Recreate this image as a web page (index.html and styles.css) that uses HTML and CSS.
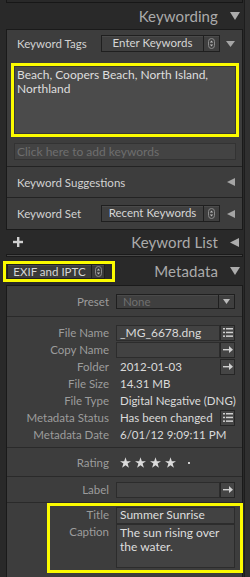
FILE: index.html
```html
<!DOCTYPE html>
<html>
<head>
<meta charset="utf-8">
<link rel="stylesheet" href="styles.css">
</head>
<body>
<div class="app">
  <div class="main">
    <div class="prev"></div>

    <div class="hdr">
      <span class="hdr-title">Keywording</span>
      <svg class="tri-hdr" width="10" height="8" viewBox="0 0 10 8"><polygon points="0,0 10,0 5,8"/></svg>
    </div>

    <div class="panel kw">
      <div class="sec tags">
        <div class="kw-row">
          <span class="kw-lbl">Keyword Tags</span>
          <div class="select sel-kw"><span class="sel-text">Enter Keywords</span><span class="step"><svg width="7" height="11" viewBox="0 0 7 11"><rect x="0.5" y="0.5" width="6" height="10" rx="3" fill="none" stroke="#8a8a8a"/><polygon points="3.5,2.5 5.2,4.6 1.8,4.6" fill="#bbb"/><polygon points="3.5,8.5 5.2,6.4 1.8,6.4" fill="#bbb"/></svg></span></div>
          <svg class="tri-sm" width="9" height="6" viewBox="0 0 9 6"><polygon points="0,0 9,0 4.5,6"/></svg>
        </div>
        <div class="hl hl-kw">
          <div class="kw-area">Beach, Coopers Beach, North Island, Northland</div>
        </div>
        <div class="kw-add">Click here to add keywords</div>
      </div>
      <div class="sec sug">
        <span class="kw-lbl">Keyword Suggestions</span>
        <svg class="tri-left" width="8" height="8" viewBox="0 0 8 8"><polygon points="8,0 8,8 0,4"/></svg>
      </div>
      <div class="sec set">
        <span class="kw-lbl">Keyword Set</span>
        <div class="select sel-kw"><span class="sel-text">Recent Keywords</span><span class="step"><svg width="7" height="11" viewBox="0 0 7 11"><rect x="0.5" y="0.5" width="6" height="10" rx="3" fill="none" stroke="#8a8a8a"/><polygon points="3.5,2.5 5.2,4.6 1.8,4.6" fill="#bbb"/><polygon points="3.5,8.5 5.2,6.4 1.8,6.4" fill="#bbb"/></svg></span></div>
        <svg class="tri-left" width="8" height="8" viewBox="0 0 8 8"><polygon points="8,0 8,8 0,4"/></svg>
      </div>
    </div>

    <div class="hdr hdr-list">
      <svg class="plus" width="10" height="10" viewBox="0 0 10 10"><rect x="4" y="0" width="2.4" height="10"/><rect x="0" y="3.8" width="10" height="2.4"/></svg>
      <span class="hdr-title">Keyword List</span>
      <svg class="tri-hdr" width="9" height="9" viewBox="0 0 9 9"><polygon points="9,0 9,9 0,4.5"/></svg>
    </div>
    <div class="panel collapsed"></div>

    <div class="hdr hdr-meta">
      <div class="hl hl-meta">
        <div class="select sel-meta"><span class="sel-text">EXIF and IPTC</span><span class="step"><svg width="7" height="11" viewBox="0 0 7 11"><rect x="0.5" y="0.5" width="6" height="10" rx="3" fill="none" stroke="#8a8a8a"/><polygon points="3.5,2.5 5.2,4.6 1.8,4.6" fill="#bbb"/><polygon points="3.5,8.5 5.2,6.4 1.8,6.4" fill="#bbb"/></svg></span></div>
      </div>
      <span class="hdr-title">Metadata</span>
      <svg class="tri-hdr" width="10" height="8" viewBox="0 0 10 8"><polygon points="0,0 10,0 5,8"/></svg>
    </div>

    <div class="panel md">
      <div class="md-preset">
        <span class="md-lbl">Preset</span>
        <div class="select sel-preset"><span class="sel-text dim">None</span><span class="step step-arrow"><svg width="7" height="5" viewBox="0 0 7 5"><polygon points="0,0 7,0 3.5,5" fill="#bbb"/></svg></span></div>
      </div>

      <div class="md-block info">
        <div class="md-row">
          <span class="md-lbl">File Name</span>
          <div class="field">_MG_6678.dng</div>
          <div class="btn"><svg width="10" height="9" viewBox="0 0 10 9"><rect x="0" y="0" width="2" height="1.5"/><rect x="3" y="0" width="7" height="1.5"/><rect x="0" y="3.7" width="2" height="1.5"/><rect x="3" y="3.7" width="7" height="1.5"/><rect x="0" y="7.4" width="2" height="1.5"/><rect x="3" y="7.4" width="7" height="1.5"/></svg></div>
        </div>
        <div class="md-row">
          <span class="md-lbl">Copy Name</span>
          <div class="field"></div>
          <div class="btn"><svg width="10" height="7" viewBox="0 0 10 7"><rect x="0" y="3" width="8" height="1.4"/><polygon points="6,0 10,3.7 6,7"/></svg></div>
        </div>
        <div class="md-row">
          <span class="md-lbl">Folder</span>
          <div class="val">2012-01-03</div>
          <div class="btn"><svg width="10" height="7" viewBox="0 0 10 7"><rect x="0" y="3" width="8" height="1.4"/><polygon points="6,0 10,3.7 6,7"/></svg></div>
        </div>
        <div class="md-row">
          <span class="md-lbl">File Size</span>
          <div class="val">14.31 MB</div>
        </div>
        <div class="md-row">
          <span class="md-lbl">File Type</span>
          <div class="val wide">Digital Negative (DNG)</div>
        </div>
        <div class="md-row">
          <span class="md-lbl">Metadata Status</span>
          <div class="val">Has been changed</div>
          <div class="btn"><svg width="10" height="9" viewBox="0 0 10 9"><rect x="0" y="0" width="2" height="1.5"/><rect x="3" y="0" width="7" height="1.5"/><rect x="0" y="3.7" width="2" height="1.5"/><rect x="3" y="3.7" width="7" height="1.5"/><rect x="0" y="7.4" width="2" height="1.5"/><rect x="3" y="7.4" width="7" height="1.5"/></svg></div>
        </div>
        <div class="md-row">
          <span class="md-lbl">Metadata Date</span>
          <div class="val wide">6/01/12 9:09:11 PM</div>
        </div>
      </div>

      <div class="md-block rating">
        <div class="md-row">
          <span class="md-lbl">Rating</span>
          <div class="stars">
            <svg width="11" height="11" viewBox="0 0 20 19"><polygon points="10,0 12.4,7 20,7 13.8,11.5 16.2,19 10,14.4 3.8,19 6.2,11.5 0,7 7.6,7"/></svg>
            <svg width="11" height="11" viewBox="0 0 20 19"><polygon points="10,0 12.4,7 20,7 13.8,11.5 16.2,19 10,14.4 3.8,19 6.2,11.5 0,7 7.6,7"/></svg>
            <svg width="11" height="11" viewBox="0 0 20 19"><polygon points="10,0 12.4,7 20,7 13.8,11.5 16.2,19 10,14.4 3.8,19 6.2,11.5 0,7 7.6,7"/></svg>
            <svg width="11" height="11" viewBox="0 0 20 19"><polygon points="10,0 12.4,7 20,7 13.8,11.5 16.2,19 10,14.4 3.8,19 6.2,11.5 0,7 7.6,7"/></svg>
            <span class="dot"></span>
          </div>
        </div>
      </div>

      <div class="md-block label">
        <div class="md-row">
          <span class="md-lbl">Label</span>
          <div class="field"></div>
          <div class="btn"><svg width="10" height="7" viewBox="0 0 10 7"><rect x="0" y="3" width="8" height="1.4"/><polygon points="6,0 10,3.7 6,7"/></svg></div>
        </div>
      </div>

      <div class="md-iptc">
        <div class="hl hl-iptc">
          <div class="ip-row">
            <span class="ip-lbl">Title</span>
            <div class="ip-field">Summer Sunrise</div>
          </div>
          <div class="ip-row">
            <span class="ip-lbl">Caption</span>
            <div class="ip-field cap">The sun rising over the water.</div>
          </div>
        </div>
      </div>
    </div>
  </div>
  <div class="scroll"></div>
</div>
</body>
</html>
```

FILE: styles.css
```css
html, body {
  margin: 0;
  padding: 0;
}
body {
  background: #292929;
  width: 250px;
  height: 577px;
  overflow: hidden;
  font-family: Lato, "Open Sans", sans-serif;
  font-size: 11px;
  color: #d4d4d4;
}
.app {
  display: flex;
  height: 577px;
}
.main {
  width: 244px;
  flex: none;
}
.scroll {
  flex: 1;
  border-left: 1px solid #1d1d1d;
  background: #303030;
}
.prev {
  margin-left: 6px;
  width: 237px;
  box-sizing: border-box;
  border-left: 1px solid #171717;
  border-right: 1px solid #171717;
  border-bottom: 1px solid #171717;
  height: 3px;
}

/* headers */
.hdr {
  height: 26px;
  display: flex;
  align-items: center;
  justify-content: flex-end;
  padding-right: 4px;
}
.hdr-title {
  font-size: 15px;
  color: #ababab;
  margin-right: 12px;
  letter-spacing: 0.1px;
}
.tri-hdr {
  fill: #acacac;
  flex: none;
}
.hdr-list {
  height: 24px;
}
.hdr-list .plus {
  fill: #d0d0d0;
  margin-left: 13px;
  margin-right: auto;
}
.hdr-list .tri-hdr {
  margin-right: 1px;
}
.hdr-meta {
  height: 28px;
}
.hdr-meta .hdr-title {
  margin-left: auto;
}

/* panels */
.panel {
  margin-left: 6px;
  width: 237px;
  box-sizing: border-box;
  border: 1px solid #1a1a1a;
  background: #3d3d3d;
}
.sec {
  border-bottom: 1px solid #232323;
}
.sec:last-child {
  border-bottom: none;
}
.tags {
  padding: 5px 0 6px 0;
}
.kw-row {
  display: flex;
  align-items: center;
  height: 17px;
}
.kw-lbl {
  color: #d2d2d2;
  font-size: 11.5px;
}
.kw-row .kw-lbl,
.set .kw-lbl {
  width: 84px;
  padding-left: 10px;
  flex: none;
}
.select {
  display: flex;
  align-items: stretch;
  box-sizing: border-box;
  border: 1px solid #1f1f1f;
  background: #3f3f3f;
  box-shadow: inset 0 1px 0 #4a4a4a;
}
.sel-text {
  flex: 1;
  text-align: center;
  color: #d6d6d6;
  font-size: 11.5px;
  line-height: 14px;
  white-space: nowrap;
}
.step {
  width: 15px;
  border-left: 1px solid #1f1f1f;
  display: flex;
  align-items: center;
  justify-content: center;
  flex: none;
}
.sel-kw {
  width: 119px;
  height: 17px;
}
.tri-sm {
  fill: #a5a5a5;
  margin-left: 6px;
}
.hl {
  box-sizing: border-box;
  border: 3px solid #fbfb00;
}
.hl-kw {
  margin: 11px 0 0 4px;
  width: 228px;
  height: 74px;
}
.kw-area {
  height: 100%;
  box-sizing: border-box;
  background: #4b4b4b;
  border: 1px solid #363636;
  padding: 1px 2px;
  line-height: 14px;
  font-size: 12px;
  color: #dedede;
}
.kw-add {
  margin: 6px 0 0 7px;
  width: 222px;
  height: 17px;
  box-sizing: border-box;
  border: 1px solid #333;
  background: #434343;
  color: #6e6e6e;
  font-size: 12px;
  line-height: 15px;
  padding-left: 2px;
}
.sug {
  height: 30px;
  display: flex;
  align-items: center;
  padding-left: 10px;
}
.sug .kw-lbl {
  flex: 1;
}
.tri-left {
  fill: #a5a5a5;
  margin-right: 7px;
}
.set {
  height: 31px;
  display: flex;
  align-items: center;
}
.set .tri-left {
  margin-left: 7px;
}
.collapsed {
  height: 3px;
  background: #474747;
}

/* metadata header select */
.hl-meta {
  margin-left: 3px;
  margin-top: 1px;
  width: 112px;
  height: 21px;
  padding: 0 1px 0 1px;
  display: flex;
  align-items: center;
}
.sel-meta {
  width: 98px;
  height: 15px;
  background: #3a3a3a;
}
.sel-meta .sel-text {
  line-height: 13px;
  font-size: 11.5px;
}
.sel-meta .step {
  width: 12px;
}

/* metadata */
.md-preset {
  display: flex;
  align-items: center;
  padding: 8px 0 7px;
  border-bottom: 1px solid #2a2a2a;
}
.md-lbl {
  width: 102px;
  flex: none;
  text-align: right;
  color: #9c9c9c;
  font-size: 11.5px;
  margin-right: 7px;
  white-space: nowrap;
}
.sel-preset {
  width: 119px;
  height: 15px;
}
.sel-preset .sel-text {
  text-align: left;
  padding-left: 6px;
  line-height: 13px;
}
.dim {
  color: #6f6f6f !important;
}
.md-block {
  border-bottom: 1px solid #2a2a2a;
}
.info {
  padding: 7px 0 4px;
}
.md-row {
  display: flex;
  align-items: center;
  height: 17px;
}
.field {
  width: 104px;
  height: 16px;
  box-sizing: border-box;
  border: 1px solid #2c2c2c;
  background: #424242;
  color: #dadada;
  font-size: 12px;
  line-height: 14px;
  padding-left: 3px;
  flex: none;
}
.val {
  width: 104px;
  flex: none;
  box-sizing: border-box;
  padding-left: 4px;
  color: #dadada;
  font-size: 11.5px;
  white-space: nowrap;
}
.val.wide {
  width: auto;
}
.btn {
  width: 15px;
  height: 16px;
  box-sizing: border-box;
  border: 1px solid #262626;
  background: #454545;
  display: flex;
  align-items: center;
  justify-content: center;
  fill: #d0d0d0;
  flex: none;
}
.rating {
  height: 28px;
  display: flex;
  align-items: center;
}
.rating .md-row {
  width: 100%;
}
.stars {
  display: flex;
  align-items: center;
  gap: 4px;
  padding-left: 4px;
  fill: #dcdcdc;
}
.dot {
  width: 2px;
  height: 2px;
  background: #cfcfcf;
  margin-left: 8px;
  margin-top: 2px;
}
.label {
  height: 25px;
  display: flex;
  align-items: center;
}
.label .md-row {
  width: 100%;
}
.md-iptc {
  height: 76px;
}
.hl-iptc {
  margin-left: 40px;
  width: 196px;
  height: 70px;
  padding: 1px 5px 2px 0;
}
.ip-row {
  display: flex;
  align-items: flex-start;
}
.ip-lbl {
  width: 59px;
  flex: none;
  text-align: right;
  margin-right: 7px;
  color: #9c9c9c;
  font-size: 11.5px;
  line-height: 16px;
}
.ip-field {
  width: 119px;
  height: 17px;
  box-sizing: border-box;
  border: 1px solid #2c2c2c;
  background: #424242;
  color: #dedede;
  font-size: 12px;
  line-height: 14px;
  padding-left: 3px;
}
.ip-field.cap {
  height: 44px;
  line-height: 14px;
  padding-top: 1px;
}
```
